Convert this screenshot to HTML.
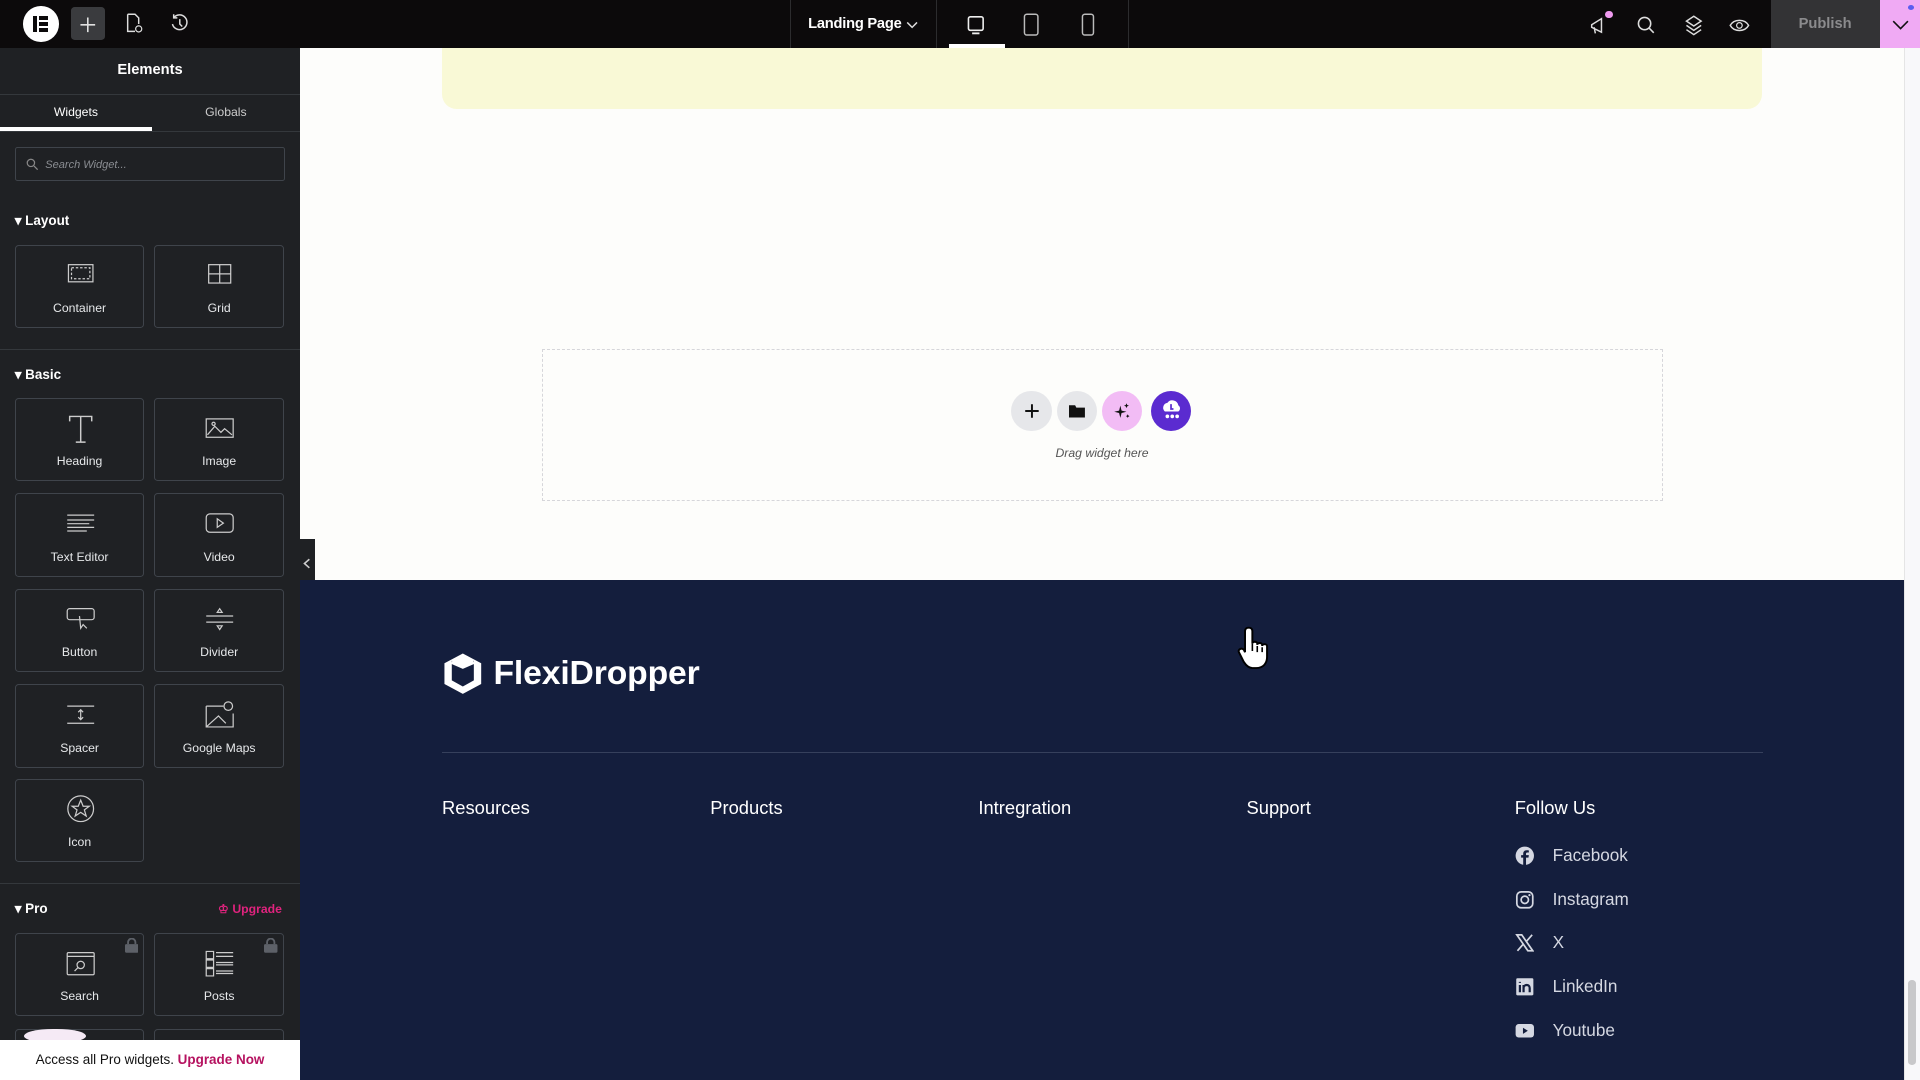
<!DOCTYPE html>
<html><head><meta charset="utf-8"><style>
*{box-sizing:border-box;margin:0;padding:0}
html,body{width:1920px;height:1080px;overflow:hidden;background:#fdfdfb}
#w{zoom:1.22449;width:1568px;height:882px;position:relative;font-family:"Liberation Sans",sans-serif;overflow:hidden}
.a{position:absolute}
#top{left:0;top:0;width:1568px;height:39px;background:#0c0a0b}
#side{left:0;top:39px;width:245px;height:843px;background:#1f2124;color:#e6e8ea}
.card{position:absolute;width:106px;height:68px;border:1px solid #3f444b;border-radius:3px;text-align:center;font-size:10px;color:#e6e8ea}
.card svg{position:absolute;left:41px;top:12px}
.card span{position:absolute;left:0;right:0;top:45px}
.sec{position:absolute;left:12px;font-size:11px;font-weight:bold;color:#fff}
.sep{position:absolute;left:0;width:245px;height:1px;background:#34383c}
.lk{position:absolute;fill:#5d6168}
.ft{color:#fff;font-size:15px;position:absolute;top:651px}
.so{position:absolute;left:1237px;color:#d5d8e2;font-size:14px}
.so svg{position:absolute;left:0;top:1px}
.so span{position:absolute;left:31px;white-space:nowrap}
</style></head><body><div id="w">
<div id="top" class="a">
 <div class="a" style="left:19px;top:5px;width:29px;height:29px;border-radius:50%;background:#fff"></div>
 <div class="a" style="left:27px;top:13px;width:3px;height:13px;background:#0c0a0b"></div>
 <div class="a" style="left:32px;top:13px;width:7px;height:3px;background:#0c0a0b"></div>
 <div class="a" style="left:32px;top:18px;width:7px;height:3px;background:#0c0a0b"></div>
 <div class="a" style="left:32px;top:23px;width:7px;height:3px;background:#0c0a0b"></div>
 <div class="a" style="left:58px;top:6px;width:28px;height:27px;border-radius:3px;background:#3a3b3e"></div>
 <svg class="a" style="left:64px;top:12px" width="16" height="16"><path d="M8 2v12M2 8h12" stroke="#e0e0e0" stroke-width="1.3"/></svg>
 <svg class="a" style="left:101px;top:11px" width="16" height="17"><path d="M3 1h6l3 3v5M3 1v14h6" stroke="#ddd" fill="none" stroke-width="1.2"/><circle cx="12" cy="13" r="2.5" stroke="#ddd" fill="none"/></svg>
 <svg class="a" style="left:139px;top:11px" width="16" height="17"><path d="M3 4a6 6 0 1 1-1 5M3 1v3h3M8 5v4l2 2" stroke="#ddd" fill="none" stroke-width="1.2"/></svg>
 <div class="a" style="left:645px;top:0;width:1px;height:39px;background:#2c2c2e"></div>
 <div class="a" style="left:764px;top:0;width:1px;height:39px;background:#2c2c2e"></div>
 <div class="a" style="left:921px;top:0;width:1px;height:39px;background:#2c2c2e"></div>
 <div class="a" style="left:660px;top:13px;color:#fff;font-size:12px;font-weight:bold;letter-spacing:-0.2px">Landing Page</div>
 <svg class="a" style="left:740px;top:16px" width="10" height="8"><path d="M1 2l4 4 4-4" stroke="#ddd" fill="none" stroke-width="1.2"/></svg>
 <svg class="a" style="left:789px;top:12px" width="17" height="17"><rect x="2" y="1.5" width="12" height="11" rx="1.5" stroke="#eee" fill="none" stroke-width="1.3"/><path d="M5 15h6" stroke="#eee" stroke-width="1.5"/></svg>
 <div class="a" style="left:775px;top:36px;width:46px;height:3px;background:#fff"></div>
 <svg class="a" style="left:835px;top:11px" width="16" height="19"><rect x="2" y="1" width="11" height="17" rx="2" stroke="#bbb" fill="none" stroke-width="1.2"/></svg>
 <svg class="a" style="left:882px;top:11px" width="14" height="19"><rect x="2" y="1" width="9" height="17" rx="2" stroke="#bbb" fill="none" stroke-width="1.2"/></svg>
 <svg class="a" style="left:1297px;top:12px" width="18" height="18"><path d="M3 8l8-5v11L3 10zM5 10l1 5" stroke="#ddd" fill="none" stroke-width="1.2"/></svg>
 <div class="a" style="left:1311px;top:9px;width:6px;height:6px;border-radius:50%;background:#ef9aef"></div>
 <svg class="a" style="left:1336px;top:12px" width="16" height="16"><circle cx="7" cy="7" r="5" stroke="#ddd" fill="none" stroke-width="1.3"/><path d="M10.5 10.5l4 4" stroke="#ddd" stroke-width="1.3"/></svg>
 <svg class="a" style="left:1375px;top:12px" width="16" height="17"><path d="M8 1l6 4-6 4-6-4zM2 8.5l6 4 6-4M2 12l6 4 6-4" stroke="#ddd" fill="none" stroke-width="1.2"/></svg>
 <svg class="a" style="left:1412px;top:12px" width="17" height="17"><path d="M1 8.5C4 3 13 3 16 8.5 13 14 4 14 1 8.5z" stroke="#ddd" fill="none" stroke-width="1.2"/><circle cx="8.5" cy="8.5" r="2.3" stroke="#ddd" fill="none"/></svg>
 <div class="a" style="left:1446px;top:0;width:89px;height:39px;background:#333335;color:#8b8b8d;font-size:12px;font-weight:bold;text-align:center;line-height:40px">Publish</div>
 <div class="a" style="left:1535px;top:0;width:33px;height:39px;background:#f0aaf4"></div>
 <svg class="a" style="left:1545px;top:16px" width="14" height="9"><path d="M1 1l6 6 6-6" stroke="#111" fill="none" stroke-width="1.3"/></svg>
 <div class="a" style="left:1558px;top:4px;width:5px;height:4px;border-radius:50%;background:#5a5cf0"></div>
</div>
<div id="side" class="a">
 <div class="a" style="left:0;width:245px;top:12px;text-align:center;font-size:12px;font-weight:bold;color:#fff">Elements</div>
 <div class="sep" style="top:38px"></div>
 <div class="a" style="left:0;width:124px;top:47px;text-align:center;font-size:10px;color:#fff">Widgets</div>
 <div class="a" style="left:124px;width:121px;top:47px;text-align:center;font-size:10px;color:#ccc">Globals</div>
 <div class="a" style="left:0;top:65px;width:124px;height:3px;background:#fff"></div>
 <div class="sep" style="top:68px"></div>
 <div class="a" style="left:12px;top:81px;width:221px;height:28px;border:1px solid #3f444b;border-radius:2px"></div>
 <svg class="a" style="left:21px;top:90px" width="10" height="10"><circle cx="4" cy="4" r="3" stroke="#888" fill="none"/><path d="M6.5 6.5l3 3" stroke="#888"/></svg>
 <div class="a" style="left:37px;top:91px;font-size:9px;font-style:italic;color:#8a8d92">Search Widget...</div>
 <div class="sec" style="top:135px">▾ Layout</div>
 <div class="card" style="left:12px;top:161px"><svg width="24" height="20"><rect x="2" y="3" width="20" height="14" stroke="#ccc" fill="none"/><rect x="4.5" y="5.5" width="15" height="9" stroke="#ccc" fill="none" stroke-dasharray="2 1.5"/></svg><span>Container</span></div>
 <div class="card" style="left:126px;top:161px"><svg width="24" height="20"><rect x="3" y="3" width="18" height="15" stroke="#ccc" fill="none"/><path d="M3 10.5h18M12 3v15" stroke="#ccc"/></svg><span>Grid</span></div>
 <div class="sep" style="top:246px"></div>
 <div class="sec" style="top:261px">▾ Basic</div>
 <div class="card" style="left:12px;top:286px"><svg width="24" height="26"><path d="M3 6V2h18v4M12 2v21M8 23h8" stroke="#ccc" fill="none" stroke-width="1.2"/></svg><span>Heading</span></div>
 <div class="card" style="left:126px;top:286px"><svg width="24" height="24"><rect x="1" y="4" width="22" height="15" stroke="#ccc" fill="none"/><path d="M2 17l6-7 5 5 3-3 6 5" stroke="#ccc" fill="none"/><circle cx="7" cy="8" r="1.3" stroke="#ccc" fill="none"/></svg><span>Image</span></div>
 <div class="card" style="left:12px;top:364px"><svg width="24" height="24"><path d="M1 5h22M1 9h22M1 12h18M1 15h22M1 18h16" stroke="#ccc"/></svg><span>Text Editor</span></div>
 <div class="card" style="left:126px;top:364px"><svg width="24" height="24"><rect x="1" y="4" width="22" height="15" rx="3" stroke="#ccc" fill="none"/><path d="M10 8v7l5-3.5z" stroke="#ccc" fill="none"/></svg><span>Video</span></div>
 <div class="card" style="left:12px;top:442px"><svg width="24" height="24"><rect x="1" y="3" width="22" height="9" rx="2" stroke="#ccc" fill="none"/><path d="M11 9l1 10 2-3 3 3" stroke="#ccc" fill="none"/></svg><span>Button</span></div>
 <div class="card" style="left:126px;top:442px"><svg width="24" height="24"><path d="M1 9h22M1 14h22M10 6l2-3 2 3zM10 17l2 3 2-3z" stroke="#ccc" fill="none"/></svg><span>Divider</span></div>
 <div class="card" style="left:12px;top:520px"><svg width="24" height="24"><path d="M1 5h22M1 19h22M12 8v8M10 10l2-2 2 2M10 14l2 2 2-2" stroke="#ccc" fill="none"/></svg><span>Spacer</span></div>
 <div class="card" style="left:126px;top:520px"><svg width="24" height="24"><path d="M1 5h14M1 5v17h22V11M1 22l10-9 6 6" stroke="#ccc" fill="none"/><circle cx="19" cy="5" r="3.5" stroke="#ccc" fill="none"/></svg><span>Google Maps</span></div>
 <div class="card" style="left:12px;top:597px"><svg width="24" height="24"><circle cx="12" cy="12" r="10.5" stroke="#ccc" fill="none"/><path d="M12 5l2 5h5l-4 3 1.5 5L12 15l-4.5 3L9 13 5 10h5z" stroke="#ccc" fill="none"/></svg><span>Icon</span></div>
 <div class="sep" style="top:682px"></div>
 <div class="sec" style="top:697px">▾ Pro</div>
 <div class="a" style="left:178px;top:698px;font-size:10px;font-weight:bold;color:#e0237e">♔ Upgrade</div>
 <div class="card" style="left:12px;top:723px"><svg width="24" height="24"><rect x="1" y="3" width="22" height="18" rx="1" stroke="#ccc" fill="none"/><path d="M1 6h22" stroke="#ccc"/><circle cx="12" cy="13" r="3" stroke="#ccc" fill="none"/><path d="M10 15l-3 3" stroke="#ccc"/></svg><span>Search</span></div>
 <div class="card" style="left:126px;top:723px"><svg width="24" height="24"><path d="M1 2h6v6H1zM1 9h6v6H1zM1 16h6v6H1zM9 3h14M9 6h14M9 11h14M9 13h14M9 18h14M9 20h14" stroke="#ccc" fill="none"/></svg><span>Posts</span></div>
 <svg class="lk" style="left:102px;top:727px" width="11" height="12"><rect x="0" y="5" width="11" height="7" rx="1"/><path d="M2.5 5V3.5a3 3 0 0 1 6 0V5" stroke="#5d6168" fill="none" stroke-width="1.5"/></svg>
 <svg class="lk" style="left:216px;top:727px" width="11" height="12"><rect x="0" y="5" width="11" height="7" rx="1"/><path d="M2.5 5V3.5a3 3 0 0 1 6 0V5" stroke="#5d6168" fill="none" stroke-width="1.5"/></svg>
 <div class="card" style="left:12px;top:801px"></div>
 <div class="card" style="left:126px;top:801px"></div>
 <div class="a" style="left:20px;top:801px;width:50px;height:12px;border-radius:50%;background:#f5eaf5"></div>
 <div class="a" style="left:0;top:810px;width:245px;height:33px;background:#fff;font-size:11px;color:#111;text-align:center;line-height:32px">Access all Pro widgets. <b style="color:#b5115f;font-weight:bold">Upgrade Now</b></div>
</div>
<div class="a" style="left:245px;top:440px;width:12px;height:40px;background:#1f2124"></div>
<svg class="a" style="left:247px;top:456px" width="8" height="9"><path d="M6 1L2 4.5 6 8" stroke="#ccc" fill="none" stroke-width="1.3"/></svg>
<div class="a" style="left:361px;top:39px;width:1078px;height:50px;background:#f9f9d6;border-radius:0 0 12px 12px"></div>
<div class="a" style="left:443px;top:285px;width:915px;height:124px;border:1.5px dashed #d6d6da"></div>
<div class="a" style="left:826px;top:319px;width:33px;height:33px;border-radius:50%;background:#e6e7ea"></div>
<svg class="a" style="left:836px;top:329px" width="13" height="13"><path d="M6.5 1v11M1 6.5h11" stroke="#111" stroke-width="1.6"/></svg>
<div class="a" style="left:863px;top:319px;width:33px;height:33px;border-radius:50%;background:#e6e7ea"></div>
<svg class="a" style="left:873px;top:330px" width="13" height="11"><path d="M0 1h5l1 2h7v8H0z" fill="#111"/></svg>
<div class="a" style="left:900px;top:319px;width:33px;height:33px;border-radius:50%;background:#f2bcf5"></div>
<svg class="a" style="left:909px;top:328px" width="15" height="15"><path d="M6 3l1 4 4 1-4 1-1 4-1-4-4-1 4-1zM11 1l.6 1.4L13 3l-1.4.6L11 5l-.6-1.4L9 3l1.4-.6zM12 10l.5 1 1 .5-1 .5-.5 1-.5-1-1-.5 1-.5z" fill="#111"/></svg>
<div class="a" style="left:940px;top:319px;width:33px;height:33px;border-radius:50%;background:#5b2bd0"></div>
<svg class="a" style="left:947px;top:325px" width="20" height="20"><path d="M4 11a4 4 0 0 1 2-7 5 5 0 0 1 9 2 3 3 0 0 1 0 5z" fill="#fff"/><circle cx="6" cy="15" r="1.5" fill="#fff"/><circle cx="10" cy="15" r="1.5" fill="#fff"/><circle cx="14" cy="15" r="1.5" fill="#fff"/><path d="M9 5v4h2" stroke="#5b2bd0" stroke-width="1.4" fill="none"/></svg>
<div class="a" style="left:800px;top:364px;width:200px;text-align:center;font-size:10px;font-style:italic;color:#555">Drag widget here</div>
<div class="a" style="left:245px;top:474px;width:1311px;height:408px;background:#141e3d"></div>
<svg class="a" style="left:361px;top:532px" width="34" height="36"><path d="M17 2L32 10v17L17 35 2 27V10z" fill="#fff"/><path d="M17 12L8 8v16l9 5zM17 12l9-4v16l-9 5z" fill="#141e3d"/><path d="M8 9l9 4 9-4" stroke="#fff" stroke-width="3" fill="none"/></svg>
<div class="a" style="left:403px;top:535px;color:#fff;font-size:27.5px;font-weight:bold;letter-spacing:-0.1px">FlexiDropper</div>
<div class="a" style="left:361px;top:614px;width:1079px;height:1px;background:#36405c"></div>
<div class="ft" style="left:361px">Resources</div>
<div class="ft" style="left:580px">Products</div>
<div class="ft" style="left:799px">Intregration</div>
<div class="ft" style="left:1018px">Support</div>
<div class="ft" style="left:1237px">Follow Us</div>
<div class="so" style="top:690px"><svg width="16" height="16"><circle cx="8" cy="8" r="7.5" fill="#d5d8e2"/><path d="M9 16V9.5h2l.3-2H9V6.3c0-.6.2-1 1-1h1.3V3.6c-.3 0-1-.1-1.8-.1-1.8 0-2.8 1-2.8 2.8v1.2H5v2h1.7V16z" fill="#141e3d"/></svg><span>Facebook</span></div>
<div class="so" style="top:726px"><svg width="16" height="16"><rect x="1.5" y="1.5" width="13" height="13" rx="3.5" stroke="#d5d8e2" fill="none" stroke-width="1.4"/><circle cx="8" cy="8" r="3" stroke="#d5d8e2" fill="none" stroke-width="1.4"/><circle cx="11.8" cy="4.2" r=".9" fill="#d5d8e2"/></svg><span>Instagram</span></div>
<div class="so" style="top:761px"><svg width="16" height="16"><path d="M1.5 1.5h4l9 13h-4zM14 1.5L9.5 6.7M2 14.5l4.6-5.3" stroke="#d5d8e2" fill="none" stroke-width="1.4"/></svg><span>X</span></div>
<div class="so" style="top:797px"><svg width="16" height="16"><rect x="1" y="1" width="14" height="14" rx="1" fill="#d5d8e2"/><path d="M4 6.5v6M4 4v.8M7 12.5v-6M7 9c0-3 5-3.5 5 0v3.5" stroke="#141e3d" stroke-width="1.8" fill="none"/></svg><span>LinkedIn</span></div>
<div class="so" style="top:833px"><svg width="16" height="16"><rect x="0.5" y="2.5" width="15" height="11" rx="2.5" fill="#d5d8e2"/><path d="M6.5 5.5v5l4-2.5z" fill="#141e3d"/></svg><span>Youtube</span></div>
<svg class="a" style="left:1008px;top:510px" width="36" height="42"><path d="M12 3c2 0 3 1 3 3v10c0-2 4-2 4 0v1c0-2 4-2 4 0v1c0-2 4-2 4 0v9c0 5-3 9-9 9h-3c-3 0-5-2-7-5L4 23c-1-2 2-4 4-2l1 2V6c0-2 1-3 3-3z" fill="#fff" stroke="#000" stroke-width="1.6"/><path d="M15 16v6M19 18v5M23 19v4" stroke="#000" stroke-width="1.3"/></svg>
<div class="a" style="left:1555px;top:39px;width:13px;height:843px;background:#f8f8fa;border-left:1px solid #e5e5e5"></div>
<div class="a" style="left:1558px;top:800px;width:7px;height:70px;border-radius:3px;background:#c8c8ca"></div>
</div></body></html>
